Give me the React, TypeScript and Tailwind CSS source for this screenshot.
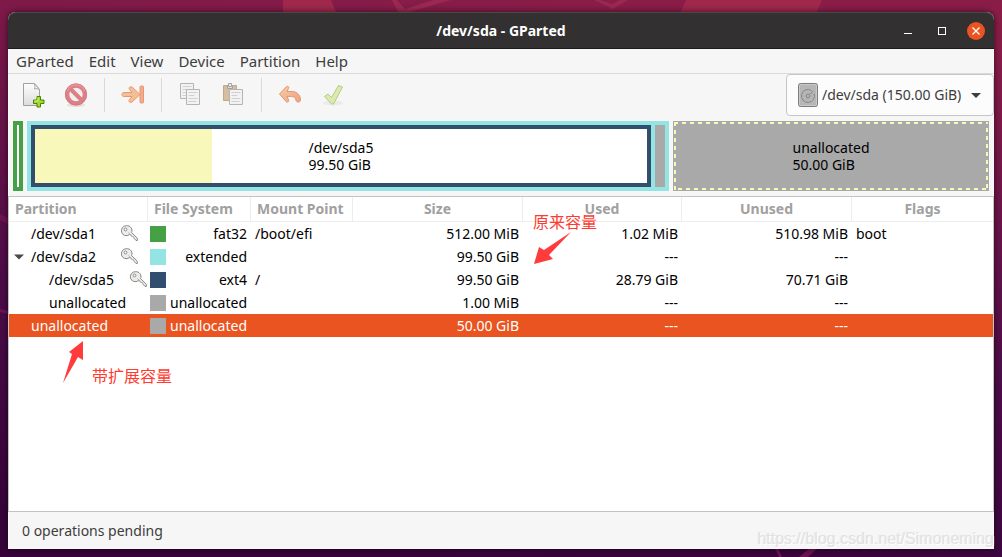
import React, { useState } from "react";

type Row = {
  name: string;
  depth: number;
  open?: boolean;
  locked?: boolean;
  color: string;
  fs: string;
  mount?: string;
  size: string;
  used: string;
  unused: string;
  flags?: string;
};

const rows: Row[] = [
  { name: "/dev/sda1", depth: 0, locked: true, color: "bg-[#46a046]", fs: "fat32", mount: "/boot/efi", size: "512.00 MiB", used: "1.02 MiB", unused: "510.98 MiB", flags: "boot" },
  { name: "/dev/sda2", depth: 0, open: true, locked: true, color: "bg-[#95e4e4]", fs: "extended", size: "99.50 GiB", used: "---", unused: "---" },
  { name: "/dev/sda5", depth: 1, locked: true, color: "bg-[#314e6c]", fs: "ext4", mount: "/", size: "99.50 GiB", used: "28.79 GiB", unused: "70.71 GiB" },
  { name: "unallocated", depth: 1, color: "bg-[#a9a9a9]", fs: "unallocated", size: "1.00 MiB", used: "---", unused: "---" },
  { name: "unallocated", depth: 0, color: "bg-[#a9a9a9]", fs: "unallocated", size: "50.00 GiB", used: "---", unused: "---" },
];

const menus = ["GParted", "Edit", "View", "Device", "Partition", "Help"];

function Desktop() {
  return (
    <svg className="absolute inset-0 size-full" viewBox="0 0 1002 557" preserveAspectRatio="none" aria-hidden="true">
      <defs>
        <linearGradient id="wall" x1="0.6" y1="0" x2="0.4" y2="1">
          <stop offset="0" stopColor="#8a1d48" />
          <stop offset="0.25" stopColor="#701648" />
          <stop offset="0.6" stopColor="#4c0c48" />
          <stop offset="1" stopColor="#36043a" />
        </linearGradient>
      </defs>
      <rect width="1002" height="557" fill="url(#wall)" />
      <path d="M283 0h48l6 14h-54zM686 0h136l-6 14H680z" fill="#9f284c" />
      <path d="M392 0h5l8 9 28-9h18l-48 14h-4zM594 0h6l12 4 8-4h8l-15 9z" fill="#9a2850" />
      <path d="M0 214l8 4v6l-8-4zM0 309l8 2v3l-8-2zM775 548h3l4 9h-3zM810 548h8l-10 9h-9z" fill="#6d1550" />
    </svg>
  );
}

function NewIcon() {
  return (
    <svg width="24" height="26" viewBox="0 0 24 26" aria-hidden="true">
      <defs>
        <linearGradient id="page" x1="0" y1="0" x2="0" y2="1">
          <stop offset="0" stopColor="#fdfdfd" />
          <stop offset="1" stopColor="#dcdcdc" />
        </linearGradient>
      </defs>
      <path d="M2.500 1.500h11l5 6v16h-16z" fill="url(#page)" stroke="#a0a19e" />
      <path d="M13.500 2c.5 2 .5 3.500 0 5 1.500-.5 3.500-.3 5 .5z" fill="#fff" stroke="#a5a5a5" />
      <path d="M16 14.500h3.500v3.500H23v3.500h-3.500V25H16v-3.500h-3.500V18H16z" fill="#a4d92b" stroke="#4a8208" />
      <path d="M17 15.500v3.500h-3.500" stroke="#d6f28a" fill="none" />
    </svg>
  );
}

function ForbidIcon() {
  return (
    <svg width="24" height="26" viewBox="0 0 24 26" aria-hidden="true">
      <ellipse cx="12" cy="23" rx="9" ry="2" fill="#e3e0e0" />
      <circle cx="12" cy="12.500" r="8.800" fill="#f4eeee" stroke="#dc8087" strokeWidth="4.200" />
      <path d="M6 6.500l12 12" stroke="#dc8087" strokeWidth="4" />
      <circle cx="12" cy="12.500" r="10.600" fill="none" stroke="#d2727b" strokeWidth=".8" />
      <path d="M3.500 9a9 9 0 0 1 17 0" fill="none" stroke="#eda5a5" />
    </svg>
  );
}

function ResizeIcon() {
  return (
    <svg width="24" height="26" viewBox="0 0 24 26" aria-hidden="true">
      <g fill="#f3c096" stroke="#eb9670" strokeLinejoin="round">
        <path d="M2.500 10.500h8.500l-2.500-3c-1.200-2 .8-3.500 2.500-2.500l8 7.500-8 7.500c-1.700 1.500-4-.5-2.500-2.500l2.500-3h-8.500c-2 0-2-4 0-4z" />
        <rect x="19" y="4" width="3.500" height="17" rx="1" fill="#f1ad8e" />
      </g>
    </svg>
  );
}

function CopyIcon() {
  return (
    <svg width="22" height="26" viewBox="0 0 22 26" aria-hidden="true">
      <g fill="#f2f2f2" stroke="#b4b5b3">
        <path d="M1.500 1.500h13v15h-13z" />
        <path d="M3.500 4.500h9M3.500 7.500h6M3.500 10.500h4M3.500 13.500h4" stroke="#d0d0d0" />
        <path d="M7.500 7.500h13v15h-13z" />
        <path d="M9.500 10.500h9M9.500 13.500h6M9.500 16.500h9M9.500 19.500h8" stroke="#d0d0d0" />
      </g>
    </svg>
  );
}

function PasteIcon() {
  return (
    <svg width="22" height="26" viewBox="0 0 22 26" aria-hidden="true">
      <path d="M1.500 3.500h13v15h-13z" fill="#d5bea0" stroke="#c0a888" />
      <path d="M5.500 3.500h5v3h-5z" fill="#ddd" stroke="#a2a3a5" />
      <path d="M6.500 1.500h3v3h-3z" fill="#eee" stroke="#a2a3a5" />
      <path d="M7.500 7.500h13v15h-13z" fill="#f2f2f2" stroke="#b4b5b3" />
      <path d="M9.500 10.500h9M9.500 13.500h6M9.500 16.500h9M9.500 19.500h8" stroke="#d0d0d0" />
    </svg>
  );
}

function UndoIcon() {
  return (
    <svg width="24" height="26" viewBox="0 0 24 26" aria-hidden="true">
      <defs>
        <linearGradient id="undo" x1="0" y1="0" x2="1" y2="1">
          <stop offset="0" stopColor="#f4cda5" />
          <stop offset="1" stopColor="#efa082" />
        </linearGradient>
      </defs>
      <path
        d="M1.500 12l6.500-7c1.500-1.500 3.500-.5 2.500 1.500l-1.500 3h5c5.500 0 9 4.500 8.500 9-.5 2-4 2-4.500 0-.5-3-2-4-4.500-4h-4.500l1.500 3c1 2-1 3.500-2.500 2z"
        fill="url(#undo)"
        stroke="#e99673"
        strokeLinejoin="round"
      />
    </svg>
  );
}

function ApplyIcon() {
  return (
    <svg width="24" height="26" viewBox="0 0 24 26" aria-hidden="true">
      <ellipse cx="12" cy="21" rx="10" ry="2.500" fill="#ebebea" />
      <path d="M3.500 14.500l3.500-2.500 3.500 3.500L17.500 3.500l4 1.500-9 17h-2z" fill="#dceab0" stroke="#afcd86" strokeLinejoin="round" />
    </svg>
  );
}

function DiskIcon() {
  return (
    <svg className="pointer-events-none absolute left-3 top-[9px]" width="20" height="24" viewBox="0 0 20 24" aria-hidden="true">
      <rect x=".5" y=".5" width="19" height="23" rx="2" fill="#b6b6b6" stroke="#7d7d7d" />
      <rect x="1.500" y="1.500" width="17" height="21" rx="1" fill="none" stroke="#c9c9c9" />
      <path d="M13.500 7.500a6.500 6.500 0 1 0 2.500 3" fill="none" stroke="#858585" />
      <path d="M12 11.500L15 8" stroke="#858585" />
      <circle cx="10" cy="13" r="2" fill="#c4c4c4" stroke="#858585" />
      <circle cx="10" cy="13" r=".6" fill="#666" />
    </svg>
  );
}

function KeyIcon() {
  return (
    <svg width="17" height="17" viewBox="0 0 17 17" role="img" aria-label="mounted">
      <path
        d="M5.500.7a5 5 0 1 0 2.800 9l1.500.2 1 1.600 1.500.2.700 1.500 2 2.300h1.300v-2.300l-5.700-5.600a5 5 0 0 0-5.100-6.900z"
        fill="#ececea"
        stroke="#888a85"
      />
      <circle cx="4.500" cy="4.500" r="1.400" fill="#fff" stroke="#888a85" />
      <path d="M7.500 7.500l7 7" stroke="#b0b1ae" />
    </svg>
  );
}

function Tool({ label, children }: { label: string; children: React.ReactNode }) {
  return (
    <button type="button" aria-label={label} className="flex h-[42px] w-[42px] items-center justify-center">
      {children}
    </button>
  );
}

function Separator() {
  return <div className="mx-[6px] h-[34px] w-px bg-[#d9d9d9]" />;
}

function DiskMap() {
  return (
    <div className="mx-[5px] mt-[5px] flex h-[70px] gap-1 text-black">
      <div className="w-[10px] border-4 border-[#46a046] bg-white" />
      <div className="flex flex-[642]">
        <div className="flex flex-1 gap-1 bg-[#95e4e4] p-1">
          <div className="relative flex flex-1 items-center justify-center border-4 border-[#314e6c] bg-white">
            <div className="absolute inset-y-0 left-0 w-[29%] bg-[#f8f8ba]" />
            <p className="relative leading-[17px]">
              /dev/sda5
              <br />
              99.50 GiB
            </p>
          </div>
          <div className="w-[10px] bg-[#a9a9a9]" />
        </div>
      </div>
      <div className="relative flex flex-[316] items-center justify-center bg-[#a9a9a9]">
        <svg className="absolute inset-px h-[68px] w-[calc(100%-2px)]" aria-hidden="true">
          <rect width="100%" height="100%" fill="none" stroke="#f8f8ba" strokeWidth="4" strokeDasharray="4 4" />
        </svg>
        <p className="relative leading-[17px]">
          unallocated
          <br />
          50.00 GiB
        </p>
      </div>
    </div>
  );
}

export default function App() {
  const [selected, setSelected] = useState(4);
  const head = "h-[25px] border-r border-b border-[#ededed] px-[6px] font-bold";

  return (
    <div
      className="relative flex h-screen flex-col overflow-hidden px-2 pt-3 pb-2 text-sm text-[#3d3d3d]"
      style={{ fontFamily: '"Noto Sans", "Noto Sans CJK SC", sans-serif' }}
    >
      <Desktop />

      <div className="relative flex min-h-0 flex-1 flex-col rounded-t-lg bg-[#f6f6f6] shadow-[0_0_6px_rgba(0,0,0,0.6)]">
        {/* title bar */}
        <div className="relative flex h-[37px] shrink-0 items-center justify-end rounded-t-lg border-t border-b border-t-[#4a4848] border-b-[#1c1b1b] bg-[#323030] pr-[9px] text-white">
          <h1 className="absolute inset-x-0 text-center font-bold">/dev/sda - GParted</h1>
          <div className="relative flex items-center">
            <button type="button" aria-label="Minimize" className="flex h-5 w-[34px] items-center justify-center">
              <span className="mt-[5px] h-px w-2 bg-white" />
            </button>
            <button type="button" aria-label="Maximize" className="flex h-5 w-[34px] items-center justify-center">
              <span className="size-2 border border-white" />
            </button>
            <button
              type="button"
              aria-label="Close"
              className="ml-2 flex size-[18px] items-center justify-center rounded-full bg-[#e95420]"
            >
              <svg width="8" height="8" viewBox="0 0 8 8" stroke="#fff" strokeWidth="1.300">
                <path d="M.5.5l7 7M7.500.5l-7 7" />
              </svg>
            </button>
          </div>
        </div>

        {/* menu bar */}
        <nav className="flex h-[25px] shrink-0 items-center gap-[15px] border-b border-[#dadada] px-2 pt-px text-[15px]">
          {menus.map((menu) => (
            <button type="button" key={menu}>
              {menu}
            </button>
          ))}
        </nav>

        {/* toolbar */}
        <div className="flex shrink-0 items-center gap-px pl-1">
          <Tool label="New">
            <NewIcon />
          </Tool>
          <Tool label="Delete">
            <ForbidIcon />
          </Tool>
          <Separator />
          <Tool label="Resize/Move">
            <ResizeIcon />
          </Tool>
          <Separator />
          <Tool label="Copy">
            <CopyIcon />
          </Tool>
          <Tool label="Paste">
            <PasteIcon />
          </Tool>
          <Separator />
          <Tool label="Undo">
            <UndoIcon />
          </Tool>
          <Tool label="Apply">
            <ApplyIcon />
          </Tool>
          <div className="relative ml-auto">
            <select
              aria-label="Device"
              className="h-[42px] w-[208px] appearance-none rounded border border-[#c6c6c6] bg-[#fcfcfc] pl-[35px]"
            >
              <option>/dev/sda (150.00 GiB)</option>
            </select>
            <DiskIcon />
            <svg className="pointer-events-none absolute right-[13px] top-[19px]" width="10" height="6" viewBox="0 0 10 6" aria-hidden="true">
              <path d="M0 0h10L5 5z" fill="#3d3d3d" />
            </svg>
          </div>
        </div>

        <DiskMap />

        {/* partition list */}
        <div className="relative mt-[5px] min-h-0 flex-1 border border-[#c3c3c3] bg-white text-black">
          <table className="w-full table-fixed border-separate border-spacing-0 whitespace-nowrap">
            <colgroup>
              <col className="w-[139px]" />
              <col className="w-[103px]" />
              <col className="w-[102px]" />
              <col className="w-[170px]" />
              <col className="w-[159px]" />
              <col className="w-[170px]" />
              <col />
            </colgroup>
            <thead className="text-[#a0a0a0]">
              <tr>
                <th className={head + " text-left"}>Partition</th>
                <th className={head + " text-left"}>File System</th>
                <th className={head + " text-left"}>Mount Point</th>
                <th className={head}>Size</th>
                <th className={head}>Used</th>
                <th className={head}>Unused</th>
                <th className="h-[25px] border-b border-[#ededed] font-bold">Flags</th>
              </tr>
            </thead>
            <tbody>
              {rows.map((row, i) => (
                <tr key={i} onClick={() => setSelected(i)} className={selected === i ? "bg-[#e95420] text-white" : ""}>
                  <td className="h-[23px] p-0">
                    <div className="flex items-center">
                      <span className={row.depth ? "flex w-10 pl-[5px]" : "flex w-[22px] pl-[5px]"}>
                        {row.open && (
                          <svg width="10" height="6" viewBox="0 0 10 6" aria-hidden="true">
                            <path d="M0 .5h10l-5 5z" fill="#4a4a4a" />
                          </svg>
                        )}
                      </span>
                      <span className={row.depth ? "w-[81px]" : "w-[90px]"}>{row.name}</span>
                      {row.locked && <KeyIcon />}
                    </div>
                  </td>
                  <td className="p-0 pr-1 pl-[2px]">
                    <div className="flex items-center justify-between">
                      <span className={"size-4 " + row.color} />
                      {row.fs}
                    </div>
                  </td>
                  <td className="p-0 pl-1">{row.mount}</td>
                  <td className="p-0 pr-1 text-right">{row.size}</td>
                  <td className="p-0 pr-1 text-right">{row.used}</td>
                  <td className="p-0 pr-1 text-right">{row.unused}</td>
                  <td className="p-0 pl-1">{row.flags}</td>
                </tr>
              ))}
            </tbody>
          </table>

          {/* notes drawn over the list */}
          <div className="pointer-events-none absolute left-[524px] top-[15px] text-base leading-5 text-[#ff3b30]">
            原来容量
            <svg className="ml-px" width="38" height="34" viewBox="0 0 38 34" aria-hidden="true">
              <path d="M0 32L5 15l5 3L37 0 15 23l4 4z" fill="#ff3b3b" />
            </svg>
          </div>
          <div className="pointer-events-none absolute left-[54px] top-36 flex text-base leading-5 text-[#ff3b30]">
            <svg width="22" height="42" viewBox="0 0 22 42" aria-hidden="true">
              <path d="M20 0L6 11l3 2L0 42l15-26 5 3z" fill="#ff3b3b" />
            </svg>
            <span className="mt-[25px] ml-[7px]">带扩展容量</span>
          </div>
        </div>

        <div className="flex h-[37px] shrink-0 items-center pl-[14px]">0 operations pending</div>
      </div>

      <div className="pointer-events-none absolute right-2 bottom-2 font-['Liberation_Sans'] text-base leading-5 text-[#e2e2e2] [text-shadow:1px_1px_0_#fff,-1px_0_0_#ececec]">
        https://blog.csdn.net/Simoneming
      </div>
    </div>
  );
}
